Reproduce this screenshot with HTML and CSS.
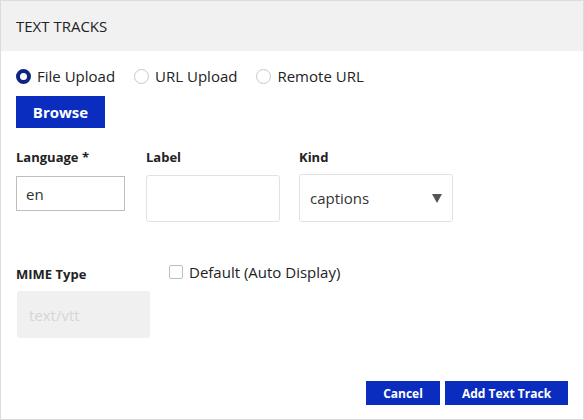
FILE: index.html
```html
<!DOCTYPE html>
<html>
<head>
<meta charset="utf-8">
<link rel="stylesheet" href="styles.css">
</head>
<body>
<div class="dialog">
  <div class="header">TEXT TRACKS</div>
  <div class="body">
    <div class="radios">
      <label class="radio"><span class="dot checked"></span>File Upload</label>
      <label class="radio"><span class="dot"></span>URL Upload</label>
      <label class="radio"><span class="dot"></span>Remote URL</label>
    </div>
    <button class="btn browse">Browse</button>
    <div class="fields">
      <div class="field f-lang">
        <div class="lbl">Language *</div>
        <div class="input lang">en</div>
      </div>
      <div class="field f-label">
        <div class="lbl">Label</div>
        <div class="input soft tall"></div>
      </div>
      <div class="field f-kind">
        <div class="lbl">Kind</div>
        <div class="input soft tall select">captions<span class="arrow"></span></div>
      </div>
    </div>
    <div class="mime-row">
      <div class="field f-mime">
        <div class="lbl">MIME Type</div>
        <div class="input disabled">text/vtt</div>
      </div>
      <label class="check"><span class="box"></span>Default (Auto Display)</label>
    </div>
    <div class="footer">
      <button class="btn small">Cancel</button>
      <button class="btn small add">Add Text Track</button>
    </div>
  </div>
</div>
</body>
</html>
```

FILE: styles.css
```css
* { box-sizing: border-box; }
html, body { margin: 0; padding: 0; background: #fff; }
body { font-family: "Open Sans", "Noto Sans", sans-serif; color: #222; }

.dialog {
  width: 584px;
  height: 420px;
  border: 1px solid #dcdcdc;
  display: flex;
  flex-direction: column;
}
.header {
  height: 50px;
  background: #f1f1f1;
  padding-left: 15px;
  display: flex;
  align-items: center;
  font-size: 15px;
  color: #222;
}
.body {
  flex: 1;
  padding: 15px 15px 14px 15px;
  display: flex;
  flex-direction: column;
}
.radios {
  display: flex;
  align-items: center;
  height: 20px;
  font-size: 15px;
}
.radio {
  display: flex;
  align-items: center;
  margin-right: 19px;
}
.dot {
  width: 15px;
  height: 15px;
  border-radius: 50%;
  border: 1px solid #c8c8c8;
  margin-right: 6px;
  background: #fff;
}
.dot.checked {
  border: 4.5px solid #0d2580;
  background: #fff;
}
.btn {
  font-family: "Open Sans", "Noto Sans", sans-serif;
  background: #0a2dbf;
  color: #fff;
  border: 0;
  font-weight: 700;
  padding: 0;
}
.browse {
  margin-top: 10px;
  width: 89px;
  height: 32px;
  font-size: 15px;
}
.fields {
  display: flex;
  margin-top: 21px;
}
.lbl {
  font-size: 13px;
  font-weight: 700;
  line-height: 16px;
  color: #222;
}
.f-lang { width: 109px; margin-right: 21px; }
.f-label { width: 134px; margin-right: 19px; }
.f-kind { width: 154px; }
.input {
  font-size: 15px;
  color: #333;
  display: flex;
  align-items: center;
}
.lang {
  margin-top: 11px;
  height: 35px;
  border: 1px solid #bdbdbd;
  padding-left: 9px;
}
.soft {
  border: 1px solid #e2e2e2;
  border-radius: 3px;
}
.tall { height: 47px; margin-top: 10px; }
.f-kind .tall { height: 48px; margin-top: 9px; }
.select {
  padding-left: 10px;
  position: relative;
}
.arrow {
  position: absolute;
  right: 10px;
  top: 19px;
  width: 0;
  height: 0;
  border-left: 5px solid transparent;
  border-right: 5px solid transparent;
  border-top: 9px solid #555;
}
.mime-row {
  display: flex;
  align-items: flex-start;
  margin-top: 38px;
}
.f-mime { width: 134px; margin-right: 19px; padding-top: 6px; }
.disabled {
  margin-top: 9px;
  margin-left: 1px;
  height: 47px;
  background: #f0f0f0;
  border-radius: 3px;
  color: #d6d6d6;
  padding-left: 12px;
}
.check {
  display: flex;
  align-items: center;
  font-size: 15px;
  line-height: 20px;
  margin-top: 2px;
  color: #222;
}
.box {
  width: 14px;
  height: 14px;
  border: 1px solid #bdbdbd;
  border-radius: 2px;
  margin-right: 6px;
}
.footer {
  margin-top: auto;
  display: flex;
  justify-content: flex-end;
  gap: 5px;
}
.small {
  height: 24px;
  font-size: 12px;
}
.small:first-child { width: 74px; }
.add { width: 123px; }
```
